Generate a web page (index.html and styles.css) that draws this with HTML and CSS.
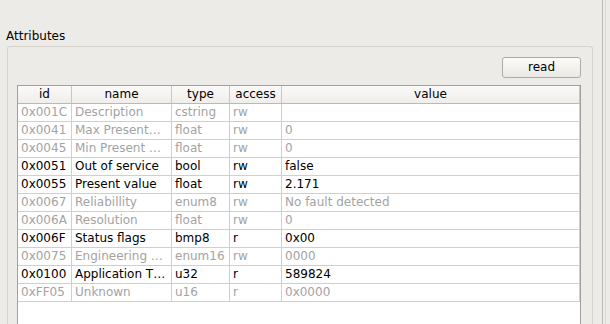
FILE: index.html
```html
<!DOCTYPE html>
<html lang="en">
<head>
    <meta charset="UTF-8">
    <title>Attributes</title>
    <link rel="stylesheet" href="styles.css">
</head>
<body>
    <div class="window">
        <section class="panel">
            <div class="group-title">Attributes</div>
            <div class="group-box">
                <div class="toolbar">
                    <button class="btn">read</button>
                </div>
                <div class="attr-table">
                    <div class="row head">
                        <div class="cell">id</div>
                        <div class="cell">name</div>
                        <div class="cell">type</div>
                        <div class="cell">access</div>
                        <div class="cell">value</div>
                    </div>
                    <div class="row off">
                        <div class="cell">0x001C</div>
                        <div class="cell">Description</div>
                        <div class="cell">cstring</div>
                        <div class="cell">rw</div>
                        <div class="cell"></div>
                    </div>
                    <div class="row off">
                        <div class="cell">0x0041</div>
                        <div class="cell">Max Present…</div>
                        <div class="cell">float</div>
                        <div class="cell">rw</div>
                        <div class="cell">0</div>
                    </div>
                    <div class="row off">
                        <div class="cell">0x0045</div>
                        <div class="cell">Min Present …</div>
                        <div class="cell">float</div>
                        <div class="cell">rw</div>
                        <div class="cell">0</div>
                    </div>
                    <div class="row">
                        <div class="cell">0x0051</div>
                        <div class="cell">Out of service</div>
                        <div class="cell">bool</div>
                        <div class="cell">rw</div>
                        <div class="cell">false</div>
                    </div>
                    <div class="row">
                        <div class="cell">0x0055</div>
                        <div class="cell">Present value</div>
                        <div class="cell">float</div>
                        <div class="cell">rw</div>
                        <div class="cell">2.171</div>
                    </div>
                    <div class="row off">
                        <div class="cell">0x0067</div>
                        <div class="cell">Reliabillity</div>
                        <div class="cell">enum8</div>
                        <div class="cell">rw</div>
                        <div class="cell">No fault detected</div>
                    </div>
                    <div class="row off">
                        <div class="cell">0x006A</div>
                        <div class="cell">Resolution</div>
                        <div class="cell">float</div>
                        <div class="cell">rw</div>
                        <div class="cell">0</div>
                    </div>
                    <div class="row">
                        <div class="cell">0x006F</div>
                        <div class="cell">Status flags</div>
                        <div class="cell">bmp8</div>
                        <div class="cell">r</div>
                        <div class="cell">0x00</div>
                    </div>
                    <div class="row off">
                        <div class="cell">0x0075</div>
                        <div class="cell">Engineering …</div>
                        <div class="cell">enum16</div>
                        <div class="cell">rw</div>
                        <div class="cell">0000</div>
                    </div>
                    <div class="row">
                        <div class="cell">0x0100</div>
                        <div class="cell">Application T…</div>
                        <div class="cell">u32</div>
                        <div class="cell">r</div>
                        <div class="cell">589824</div>
                    </div>
                    <div class="row off">
                        <div class="cell">0xFF05</div>
                        <div class="cell">Unknown</div>
                        <div class="cell">u16</div>
                        <div class="cell">r</div>
                        <div class="cell">0x0000</div>
                    </div>
                </div>
            </div>
        </section>
        <div class="splitter"><div class="splitter-inner"></div></div>
    </div>
</body>
</html>
```

FILE: styles.css
```css
/* --- base --- */
body {
    margin: 0;
    background-color: #edebe8;
    color: #000;
    font-family: "DejaVu Sans", "Liberation Sans", sans-serif;
    font-size: 12px;
    overflow: hidden;
}

.window {
    display: flex;
    height: 100vh;
}

/* --- group box (runs on below the window edge) --- */
.panel {
    width: 593px;
    flex-shrink: 0;
    display: flex;
    flex-direction: column;
}

.group-title {
    padding: 29px 0 0 6px;
    line-height: 14px;
}

.group-box {
    flex-grow: 1;
    margin: 3px 0 0 7px;
    width: 586px;
    box-sizing: border-box;
    border: 1px solid #d6d3ce;
    border-bottom: 0;
    border-radius: 3px 3px 0 0;
    padding: 10px 11px 0 9px;
    display: flex;
    flex-direction: column;
}

.toolbar {
    display: flex;
    justify-content: flex-end;
    margin-bottom: 7px;
}

.btn {
    width: 79px;
    height: 21px;
    margin: 0;
    padding: 0;
    border: 1px solid #aeaba6;
    border-radius: 3px;
    background: linear-gradient(#fcfbfa, #ebe9e6);
    font: inherit;
    line-height: 19px;
    color: #000;
}

/* --- table --- */
.attr-table {
    flex-grow: 1;
    background: #fff;
    border: 1px solid #a3a09b;
    border-bottom: 0;
}

.row {
    display: grid;
    grid-template-columns: 54px 100px 58px 52px 298px;
    height: 18px;
}

.cell {
    box-sizing: border-box;
    border-right: 1px solid #cfcfcf;
    border-bottom: 1px solid #cfcfcf;
    padding-left: 3px;
    line-height: 17px;
    white-space: nowrap;
    overflow: hidden;
}

.row.off .cell {
    color: #a3a3a3;
}

.row.head {
    background: linear-gradient(#fbfaf9, #efedea);
}
.row.head .cell {
    text-align: center;
    padding: 0;
    border-right-color: #c9c6c1;
    border-bottom-color: #bcb9b4;
}

/* --- splitter on the right --- */
.splitter {
    margin-left: 9px;
    border-left: 1px solid #bdbab5;
    padding-left: 2px;
}
.splitter-inner {
    height: 100%;
    border-left: 1px solid #dcd9d4;
}
```
